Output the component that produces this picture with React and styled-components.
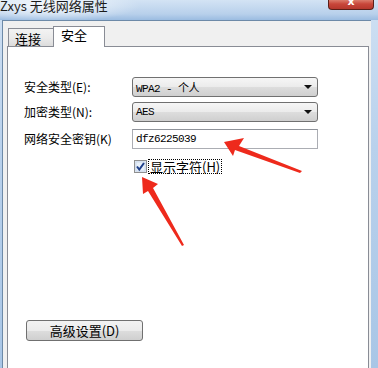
import React from "react";
import styled, { createGlobalStyle } from "styled-components";

const Global = createGlobalStyle`
  html, body {
    margin: 0;
    padding: 0;
    overflow: hidden;
  }
  body {
    font-family: "Noto Sans CJK SC", "Liberation Sans", sans-serif;
    font-size: 12px;
    color: #000;
  }
`;

const Window = styled.div`
  position: relative;
  width: 378px;
  height: 368px;
  display: flex;
  flex-direction: column;
  background: linear-gradient(180deg, #cfe0f3 0%, #b9d1ec 40%, #a9c6e6 100%);
  overflow: hidden;
`;

const TitleBar = styled.div`
  height: 20px;
  display: flex;
  align-items: flex-start;
  justify-content: space-between;
  background: radial-gradient(ellipse 90px 16px at 50px 6px, rgba(255,255,255,0.85), rgba(255,255,255,0) 100%),
    linear-gradient(180deg, #d3e3f4 0%, #b8d0eb 70%, #9bbce1 100%);
`;

const Title = styled.div`
  font-size: 13px;
  line-height: 13px;
  margin-top: -1px;
  color: #1b1b1b;
  white-space: nowrap;
`;

const CloseButton = styled.div`
  width: 44px;
  height: 10px;
  margin-right: 4px;
  margin-top: -1px;
  border: 1px solid #5a1f18;
  border-top: none;
  border-radius: 0 0 4px 4px;
  background: linear-gradient(180deg, #e08a78 0%, #c8463a 50%, #b5372c 100%);
  display: flex;
  justify-content: center;
  align-items: flex-start;
  color: #fff;
  font: bold 11px/6px "DejaVu Sans", sans-serif;
  overflow: hidden;
`;

const ClientArea = styled.div`
  flex: 1;
  margin-left: 2px;
  margin-right: 7px;
  border-left: 1px solid #6d8aa8;
  border-top: 1px solid #6d8aa8;
  background: #f0f0f0;
  display: flex;
  flex-direction: column;
  padding: 6px 2px 0 4px;
`;

const TabRow = styled.div`
  height: 20px;
  display: flex;
  align-items: flex-end;
  padding-left: 1px;
  position: relative;
  z-index: 1;
  margin-bottom: -1px;
`;

const Tab = styled.div`
  box-sizing: border-box;
  height: ${(p) => (p.$active ? "21px" : "19px")};
  width: ${(p) => (p.$active ? "52px" : "46px")};
  margin-left: ${(p) => (p.$active ? "-1px" : "0")};
  border: 1px solid #898c95;
  border-bottom: ${(p) => (p.$active ? "none" : "1px solid #898c95")};
  background: ${(p) =>
    p.$active ? "#fff" : "linear-gradient(180deg, #f3f3f3 0%, #ebebeb 50%, #dcdcdc 100%)"};
  padding: ${(p) => (p.$active ? "1px 0 0 7px" : "3px 0 0 6px")};
  font-size: 13px;
  line-height: 14px;
`;

const Panel = styled.div`
  flex: 1;
  background: #fff;
  border: 1px solid #898c95;
  border-bottom: none;
  padding: 30px 0 0 16px;
  display: flex;
  flex-direction: column;
`;

const Form = styled.div`
  display: grid;
  grid-template-columns: 108px 186px;
  align-items: center;
`;

const Label = styled.div`
  height: 20px;
  line-height: 20px;
  margin-bottom: ${(p) => p.$gap || 0}px;
  white-space: nowrap;
`;

const Select = styled.div`
  box-sizing: border-box;
  height: 20px;
  margin-bottom: ${(p) => p.$gap || 0}px;
  border: 1px solid #707070;
  border-radius: 3px;
  background: linear-gradient(180deg, #f6f6f6 0%, #ebebeb 50%, #dddddd 51%, #cfcfcf 100%);
  display: flex;
  align-items: center;
  justify-content: space-between;
  padding: 0 5px 0 3px;
`;

const FieldText = styled.span`
  font-family: "Liberation Mono", "Noto Sans CJK SC", monospace;
  font-size: 11px;
  letter-spacing: -0.6px;
`;

const Arrow = styled.span`
  width: 0;
  height: 0;
  border-left: 4px solid transparent;
  border-right: 4px solid transparent;
  border-top: 4px solid #111;
`;

const TextInput = styled.div`
  box-sizing: border-box;
  height: 20px;
  border: 1px solid #abadb3;
  border-top-color: #8e9299;
  background: #fff;
  display: flex;
  align-items: center;
  padding-left: 3px;
`;

const CheckRow = styled.div`
  grid-column: 2;
  display: flex;
  align-items: center;
  margin-top: 10px;
  margin-left: 2px;
  gap: 1px;
`;

const CheckLabel = styled.span`
  border: 1px dotted #000;
  padding: 0 1px;
  line-height: 13px;
  font-size: 13px;
`;

const Spacer = styled.div`
  flex: 1;
`;

const Button = styled.div`
  box-sizing: border-box;
  width: 117px;
  height: 21px;
  margin-left: 2px;
  margin-bottom: 27px;
  border: 1px solid #707070;
  border-radius: 3px;
  background: linear-gradient(180deg, #f2f2f2 0%, #ebebeb 50%, #dddddd 51%, #cfcfcf 100%);
  display: flex;
  align-items: center;
  justify-content: center;
  font-size: 13px;
`;

const Overlay = styled.svg`
  position: absolute;
  left: 0;
  top: 0;
  pointer-events: none;
`;

function CheckBox() {
  return (
    <svg width="13" height="13" viewBox="0 0 13 13">
      <rect x="0.5" y="0.5" width="12" height="12" fill="#dfe9f5" stroke="#8f8f8f" />
      <rect x="2" y="2" width="9" height="9" fill="#e8f0fa" stroke="#b8c8dc" strokeWidth="0.5" />
      <path d="M3 6.5 L5.3 9.5 L10 3" fill="none" stroke="#1e3f8a" strokeWidth="2" />
    </svg>
  );
}

export default function App() {
  return (
    <>
      <Global />
      <Window>
        <TitleBar>
          <Title>Zxys 无线网络属性</Title>
          <CloseButton>x</CloseButton>
        </TitleBar>
        <ClientArea>
          <TabRow>
            <Tab>连接</Tab>
            <Tab $active>安全</Tab>
          </TabRow>
          <Panel>
            <Form>
              <Label $gap={5}>安全类型(E):</Label>
              <Select $gap={5}>
                <FieldText>WPA2 - 个人</FieldText>
                <Arrow />
              </Select>
              <Label $gap={7}>加密类型(N):</Label>
              <Select $gap={7}>
                <FieldText>AES</FieldText>
                <Arrow />
              </Select>
              <Label>网络安全密钥(K)</Label>
              <TextInput>
                <FieldText>dfz6225039</FieldText>
              </TextInput>
              <CheckRow>
                <CheckBox />
                <CheckLabel>显示字符(H)</CheckLabel>
              </CheckRow>
            </Form>
            <Spacer />
            <Button>高级设置(D)</Button>
          </Panel>
        </ClientArea>
        <Overlay width="378" height="368">
          <polygon
            points="224,142 244,138 239,146 302,171 300,173 235,150 233,156"
            fill="#ee2a1c"
          />
          <polygon
            points="142,177 158,184 153,188 184,245 182,246 148,191 143,194"
            fill="#ee2a1c"
          />
        </Overlay>
      </Window>
    </>
  );
}
